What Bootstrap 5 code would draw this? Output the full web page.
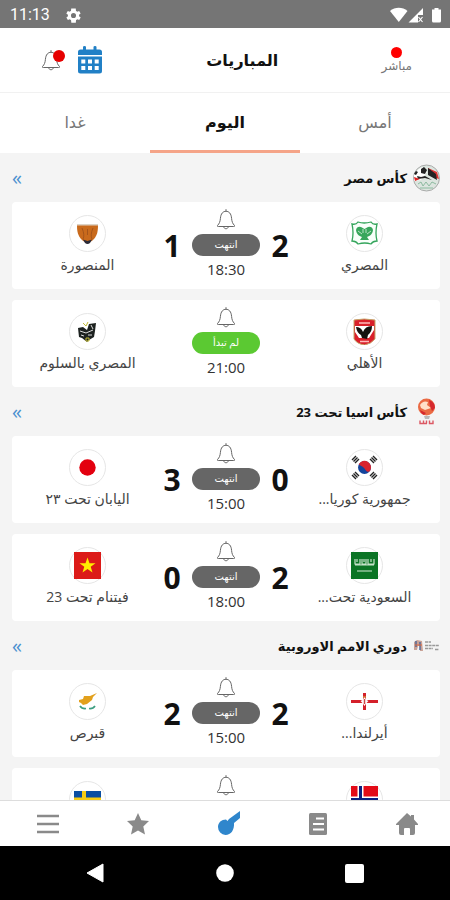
<!DOCTYPE html>
<html lang="ar" dir="rtl">
<head>
<meta charset="utf-8">
<meta name="viewport" content="width=device-width, initial-scale=1">
<title>المباريات</title>
<link rel="stylesheet" href="https://cdn.jsdelivr.net/npm/bootstrap@5.3.0/dist/css/bootstrap.min.css">
<style>
body{font-family:"Open Sans","DejaVu Sans",sans-serif;background:#f4f4f4;color:#111}
svg{display:block;flex:none}
button{color:inherit}
.sysbar{height:28px;background:#757575;color:#fff;font:16px/28px Roboto,sans-serif;padding:2px 8px 0 10px}
.topbar{height:65px;padding:0 38px 0 41px;border-bottom:1px solid #f1f1f1}
.screen-title{font-size:16px;line-height:24px;font-weight:700}
.live-btn{font-size:12px;line-height:16px;color:#777}
.live-dot{width:11px;height:11px;background:#f00}
.bell-dot{position:absolute;top:1px;right:-4px;width:12px;height:12px;background:#e60000}
.day-tab{height:60px;font-size:16px;line-height:24px;color:#777;border-bottom:3px solid transparent!important}
.day-tab.active{color:#111;font-weight:700;border-color:#f5a488!important}
.feed{min-height:0;overflow-y:auto;scrollbar-width:none;padding:0 10px 0 12px}
.feed::-webkit-scrollbar{display:none}
.league-head{height:49px;gap:6px}
.league-name{font-size:13px;line-height:20px;font-weight:700}
.more{font-size:20px;line-height:24px;color:#4a90cf}
.matches{gap:11px}
.match{height:87px;border-radius:4px}
.crest{width:37px;height:37px;border:1px solid #e6e6e6;background:#fff}
.team{padding-top:13px;min-width:0}
.team-name{font-size:14px;line-height:20px;color:#444;margin-top:3px}
.middle{gap:11px}
.score{width:18px;font-size:30px;line-height:36px;font-weight:700;padding-top:26px}
.status{width:68px;height:22px;border-radius:11px;background:#666;color:#fff;font-size:10px;line-height:20px;margin-top:4px}
.status.soon{background:#5bc932}
.kick{font-size:15px;line-height:20px;color:#333;margin-top:3px}
.bell-btn{margin-top:6px}
.tabbar{height:46px;padding:0 32px 0 37px;border-top:1px solid #ddd;color:#8a8a8a}
.tabbar .on{color:#2f86cc}
.sysnav{height:54px;padding:0 86px}
</style>
<script src="https://cdn.jsdelivr.net/npm/bootstrap@5.3.0/dist/js/bootstrap.bundle.min.js"></script>
</head>
<body class="vh-100 d-flex flex-column overflow-hidden">
<svg width="0" height="0" class="position-absolute" aria-hidden="true">
<symbol id="bell" viewBox="0 0 20 22"><path d="M10 1.200v2M1.500 17.500c2-2 2.600-4 2.900-7C4.800 5.500 7 3.300 10 3.300s5.200 2.200 5.600 7.200c.3 3 .9 5 2.900 7 .5.8 0 1-.8 1H2.300c-.8 0-1.300-.2-.8-1zM7.800 19c.3 2.300 4.100 2.300 4.400 0" fill="none" stroke="#666" stroke-width="1"/></symbol>
</svg>

<div class="sysbar d-flex align-items-center flex-shrink-0" dir="ltr">
<span>11:13</span>
<svg class="ms-3" width="15" height="15" viewBox="2 2 20 20" fill="#fff"><path d="M19.400 13c.1-.7.1-1.300 0-2l2.100-1.600-2-3.500-2.500 1a7 7 0 0 0-1.700-1L15 2.500H9l-.4 3.400a7 7 0 0 0-1.700 1l-2.500-1-2 3.500L4.600 11a8 8 0 0 0 0 2l-2.100 1.600 2 3.500 2.500-1a7 7 0 0 0 1.700 1l.4 3.400h6l.3-3.400a7 7 0 0 0 1.700-1l2.500 1 2-3.500zM12 15.400a3.400 3.400 0 1 1 0-6.800 3.400 3.400 0 0 1 0 6.800z"/></svg>
<svg class="ms-auto" width="52" height="16" viewBox="0 0 52 16"><path d="M0 4C5-.4 12.500-.4 17.500 4L8.800 15z" fill="#fff"/><path d="M18.500 15.500L33 1v7h-5v7.500z" fill="#fff"/><path d="M28.500 10l4 5m0-5l-4 5" stroke="#fff" stroke-width="1.200"/><path d="M42 2.500h2.500V1h4v1.500H51V14q0 1.500-1.500 1.500h-6Q42 15.500 42 14z" fill="#fff"/></svg>
</div>

<header class="topbar bg-white d-flex align-items-center justify-content-between flex-shrink-0">
<button class="live-btn btn p-0 border-0 d-flex flex-column align-items-center"><span class="live-dot rounded-circle"></span>مباشر</button>
<h1 class="screen-title m-0">المباريات</h1>
<div class="d-flex align-items-center gap-3">
<button class="btn p-0 border-0" aria-label="التقويم"><svg width="26" height="28" viewBox="0 0 26 28"><path d="M1 9V6q0-2.500 2.500-2.500H6V1q0-1 1.500-1T9 1v2.500h7.500V1q0-1 1.500-1t1.500 1v2.500h3Q25 3.500 25 6v3zM1 10.500h24V25q0 2.500-2.500 2.500h-19Q1 27.500 1 25z" fill="#2180c6"/><path d="M4.300 13.500h4v4h-4zm6.700 0h4v4h-4zm6.700 0h4v4h-4zM4.300 20h4v4h-4zm6.700 0h4v4h-4zm6.700 0h4v4h-4z" fill="#fff"/></svg></button>
<button class="btn p-0 border-0 position-relative" aria-label="التنبيهات"><svg width="20" height="22"><use href="#bell"/></svg><span class="bell-dot rounded-circle"></span></button>
</div>
</header>

<nav class="d-flex bg-white flex-shrink-0">
<button class="day-tab btn rounded-0 border-0 p-0 flex-fill w-100">أمس</button>
<button class="day-tab btn rounded-0 border-0 p-0 flex-fill w-100 active">اليوم</button>
<button class="day-tab btn rounded-0 border-0 p-0 flex-fill w-100">غدا</button>
</nav>

<main class="feed flex-grow-1">
<section>
<div class="league-head d-flex align-items-center">
<svg width="27" height="28" viewBox="0 0 27 28"><circle cx="13.500" cy="14" r="13" fill="#dce5df" stroke="#999" stroke-width=".8"/><path d="M1 11q4-7 9-8l4 5-6 8-7 1z" fill="#fff"/><path d="M15 4l9 4 2 7-6-2-5-4z" fill="#d33"/><path d="M15 4l8 6 1 6-9-5zM4 12l4 1 4-1 7 4-7-2-7 1zM8 5l3-2 3 3-2 4-4-1zM3 7l2 1-2 3-2-1z" fill="#222"/><path d="M1 13l6 2-5 2z" fill="#d22"/><path d="M5 20l3-2 2 4 3-4 3 4 3-4 4 2M7 24h13" stroke="#8dbba0" fill="none"/></svg>
<h2 class="league-name m-0">كأس مصر</h2><a class="more text-decoration-none me-auto" href="#" dir="ltr" aria-label="المزيد">«</a>
</div>
<div class="matches d-flex flex-column">
<article class="match bg-white d-flex">
<div class="team flex-fill w-100 d-flex flex-column align-items-center"><span class="crest rounded-circle d-flex align-items-center justify-content-center"><svg width="27" height="27" viewBox="0 0 27 27"><path d="M1 4q4 1 6-2 6 2 13 0 2 3 6 2-2 9 0 17-4 0-6 3-6-2-13 0-2-3-6-3 2-8 0-17z" fill="#f8fffa" stroke="#35a55c" stroke-width="1.300"/><path d="M5 10q1-4 5-3l3.500 2L17 7q4-1 5 3c-.5 4-3 6-6 7l2 3H9l2-3c-3-1-5.500-3-6-7z" fill="#38a65c"/><path d="M12 9v4m3-4v4M7 11l4 3m9-3l-4 3" stroke="#d9f2df" stroke-width=".8"/></svg></span><span class="team-name text-nowrap">المصري</span></div>
<div class="middle d-flex"><span class="score text-center">2</span><div class="d-flex flex-column align-items-center"><button class="bell-btn btn p-0 border-0" aria-label="تنبيه"><svg width="20" height="22"><use href="#bell"/></svg></button><span class="status text-center">انتهت</span><time class="kick">18:30</time></div><span class="score text-center">1</span></div>
<div class="team flex-fill w-100 d-flex flex-column align-items-center"><span class="crest rounded-circle d-flex align-items-center justify-content-center"><svg width="27" height="27" viewBox="0 0 27 27"><path d="M3 5h21c0 7-1 11-5 15-3 3-8 3-11 0-4-4-5-8-5-15z" fill="#c96a1c"/><path d="M3 4h21v1.500H3z" fill="#dcd3c6"/><path d="M8 8q3 7 1 11M19 8q-3 7-1 11M13.500 9v6" stroke="#a5541a" fill="none"/><path d="M9 19.500l4.500 1.500 4.500-1.500-2 3.500q-2.500 2-5 0z" fill="#2a2a38"/></svg></span><span class="team-name text-nowrap">المنصورة</span></div>
</article>
<article class="match bg-white d-flex">
<div class="team flex-fill w-100 d-flex flex-column align-items-center"><span class="crest rounded-circle d-flex align-items-center justify-content-center"><svg width="27" height="27" viewBox="0 0 27 27"><path d="M3 2q10-2 21 0v19q-4 5-10.500 6Q6 26 3 21z" fill="#d9202a" stroke="#c5a66b"/><path d="M4 8h19v12H4z" fill="#fff"/><path d="M4 14l4 6H4zM23 12v8h-5z" fill="#d9202a"/><path d="M8 5h11M9 23.500h9" stroke="#fbb" stroke-width="1.500"/><path d="M5 9q5 0 7 5 2-6 9-6 0 6-4 9l-1 4-5-1-1-3q-4-2-5-8z" fill="#15120f"/></svg></span><span class="team-name text-nowrap">الأهلي</span></div>
<div class="middle d-flex"><span class="score text-center"></span><div class="d-flex flex-column align-items-center"><button class="bell-btn btn p-0 border-0" aria-label="تنبيه"><svg width="20" height="22"><use href="#bell"/></svg></button><span class="status soon text-center">لم تبدأ</span><time class="kick">21:00</time></div><span class="score text-center"></span></div>
<div class="team flex-fill w-100 d-flex flex-column align-items-center"><span class="crest rounded-circle d-flex align-items-center justify-content-center"><svg width="27" height="27" viewBox="0 0 27 27"><path d="M4 10l5-1 4 3 2-6 7-1-1 8-1 6-5 3-2 2-5-4-3-1z" fill="#1d2220"/><path d="M17 7l2 4M6 13l6 2 7-3M7 17l3 1m4-1h4" stroke="#ddd" fill="none"/><path d="M9 5l3 3m2-4l-2 4M12 20h3v3h-3z" stroke="#c4bc35" fill="none"/></svg></span><span class="team-name text-nowrap">المصري بالسلوم</span></div>
</article>
</div>
</section>

<section>
<div class="league-head d-flex align-items-center">
<svg width="27" height="28" viewBox="0 0 27 28"><circle cx="13.500" cy="9" r="8.500" fill="#ea6a43"/><path d="M7 7q3-5 8-3l-1 3 4 3-6 2-4-2z" fill="#ffe1c9"/><path d="M16 2q6 2 6 8l-3 3-2-5zM7 12l6 3-2 2q-3-1-4-5z" fill="#d5282d"/><path d="M11 18h6l-1 3h-4z" fill="#b9b9b9"/><path d="M7 22.500v3h3.500v-3m3 3v-3m3 0v3H20v-3m-9 3h3" fill="none" stroke="#dc5964" stroke-width="1.400"/></svg>
<h2 class="league-name m-0">كأس اسيا تحت 23</h2><a class="more text-decoration-none me-auto" href="#" dir="ltr" aria-label="المزيد">«</a>
</div>
<div class="matches d-flex flex-column">
<article class="match bg-white d-flex">
<div class="team flex-fill w-100 d-flex flex-column align-items-center"><span class="crest rounded-circle d-flex align-items-center justify-content-center"><svg width="27" height="27" viewBox="0 0 27 27"><circle cx="13.500" cy="13.500" r="6.500" fill="#13449c"/><path d="M7.800 10.200a6.500 6.500 0 0 1 11.400 6.500c-1.500 2-4 1-5.200-1.500-1.500-3-5-3.500-6.200-5z" fill="#d8232f"/><g stroke="#222" stroke-width="1.400"><path d="M1 6l4-4M2.500 7.500l4-4M4 9l4-4M19 5l4 4M20.500 3.500l4 4M22 2l4 4M1 21l4 4M2.500 19.500l4 4M4 18l4 4M19 22l4-4M20.500 23.500l4-4M22 25l4-4"/></g></svg></span><span class="team-name text-nowrap">جمهورية كوريا...</span></div>
<div class="middle d-flex"><span class="score text-center">0</span><div class="d-flex flex-column align-items-center"><button class="bell-btn btn p-0 border-0" aria-label="تنبيه"><svg width="20" height="22"><use href="#bell"/></svg></button><span class="status text-center">انتهت</span><time class="kick">15:00</time></div><span class="score text-center">3</span></div>
<div class="team flex-fill w-100 d-flex flex-column align-items-center"><span class="crest rounded-circle d-flex align-items-center justify-content-center"><svg width="27" height="27" viewBox="0 0 27 27"><circle cx="13.500" cy="13.500" r="8.200" fill="#e3000f"/></svg></span><span class="team-name text-nowrap">اليابان تحت ٢٣</span></div>
</article>
<article class="match bg-white d-flex">
<div class="team flex-fill w-100 d-flex flex-column align-items-center"><span class="crest rounded-circle d-flex align-items-center justify-content-center"><svg width="27" height="27" viewBox="0 0 27 27"><path d="M0 0h27v27H0z" fill="#0b7425"/><path d="M4 7v5h5V7m2 0v5h4V7m2 0v5h6V7M6 7v3m7-3v3m7-3v3M4 13h19" fill="none" stroke="#c5e2c9" stroke-width="1.200"/><path d="M6 19h15" stroke="#d5ead8"/></svg></span><span class="team-name text-nowrap">السعودية تحت...</span></div>
<div class="middle d-flex"><span class="score text-center">2</span><div class="d-flex flex-column align-items-center"><button class="bell-btn btn p-0 border-0" aria-label="تنبيه"><svg width="20" height="22"><use href="#bell"/></svg></button><span class="status text-center">انتهت</span><time class="kick">18:00</time></div><span class="score text-center">0</span></div>
<div class="team flex-fill w-100 d-flex flex-column align-items-center"><span class="crest rounded-circle d-flex align-items-center justify-content-center"><svg width="27" height="27" viewBox="0 0 27 27"><path d="M0 0h27v27H0z" fill="#dc1a18"/><path d="M13.500 5.500l2 5.700h6l-4.800 3.600 1.800 5.800-5-3.500-5 3.500 1.800-5.800-4.800-3.600h6z" fill="#ffee00"/></svg></span><span class="team-name text-nowrap">فيتنام تحت 23</span></div>
</article>
</div>
</section>

<section>
<div class="league-head d-flex align-items-center">
<svg width="27" height="28" viewBox="0 0 27 28"><path d="M12 10h6m-6 3.500h14m-14 3h8m2 1h4" stroke="#999" stroke-width="1.500" stroke-dasharray="3 .6"/><path d="M1 10l3-2 5 1 1 10H7v-5H5l-1 4H1z" fill="#c9a297"/><path d="M3 9v6m4-5v8" stroke="#546a98" stroke-width="1.500"/><path d="M2 13h7" stroke="#e2683c"/></svg>
<h2 class="league-name m-0">دوري الامم الاوروبية</h2><a class="more text-decoration-none me-auto" href="#" dir="ltr" aria-label="المزيد">«</a>
</div>
<div class="matches d-flex flex-column">
<article class="match bg-white d-flex">
<div class="team flex-fill w-100 d-flex flex-column align-items-center"><span class="crest rounded-circle d-flex align-items-center justify-content-center"><svg width="27" height="27" viewBox="0 0 27 27"><path d="M0 13.500h27M13.500 5v17" stroke="#d4202a" stroke-width="3"/><path d="M13.500 9l2 3 2 1-2 2-2 3-2-3-2-2 2-1z" fill="#fff"/><path d="M13.500 11v5" stroke="#c44" stroke-width="1.500"/><path d="M12 9h3" stroke="#d8ad45"/></svg></span><span class="team-name text-nowrap">أيرلندا...</span></div>
<div class="middle d-flex"><span class="score text-center">2</span><div class="d-flex flex-column align-items-center"><button class="bell-btn btn p-0 border-0" aria-label="تنبيه"><svg width="20" height="22"><use href="#bell"/></svg></button><span class="status text-center">انتهت</span><time class="kick">15:00</time></div><span class="score text-center">2</span></div>
<div class="team flex-fill w-100 d-flex flex-column align-items-center"><span class="crest rounded-circle d-flex align-items-center justify-content-center"><svg width="27" height="27" viewBox="0 0 27 27"><path d="M5 12l4-1 1-3 6 0 7-3-4 4-1 3-5 4-4 1-2-2-2-1z" fill="#e2a01c"/><path d="M6 18q2 3 6 2.500m9-2.500q-2 3-6 2.500" stroke="#3c9e80" stroke-width="1.700" fill="none"/></svg></span><span class="team-name text-nowrap">قبرص</span></div>
</article>
<article class="match bg-white d-flex">
<div class="team flex-fill w-100 d-flex flex-column align-items-center"><span class="crest rounded-circle d-flex align-items-center justify-content-center"><svg width="27" height="27" viewBox="0 0 27 27"><path d="M0 0h27v27H0z" fill="#e30a17"/><path d="M9.500 0v27M0 13.500h27" stroke="#fff" stroke-width="6"/><path d="M9.500 0v27M0 13.500h27" stroke="#0a1f80" stroke-width="3"/></svg></span></div>
<div class="middle d-flex"><span class="score"></span><div class="d-flex flex-column align-items-center"><button class="bell-btn btn p-0 border-0" aria-label="تنبيه"><svg width="20" height="22"><use href="#bell"/></svg></button><span class="status"></span></div><span class="score"></span></div>
<div class="team flex-fill w-100 d-flex flex-column align-items-center"><span class="crest rounded-circle d-flex align-items-center justify-content-center"><svg width="27" height="27" viewBox="0 0 27 27"><path d="M0 5h27v17H0z" fill="#0b4ea2"/><path d="M10 5v17M0 13.500h27" stroke="#f8cc13" stroke-width="4"/></svg></span></div>
</article>
</div>
</section>
</main>

<nav class="tabbar bg-white d-flex align-items-center justify-content-between flex-shrink-0">
<a class="text-reset" href="#" aria-label="الرئيسية"><svg width="22" height="24" viewBox="0 0 22 24" fill="currentColor"><path d="M11 1l4 3.500V3h3v4.500l4 4.500v1h-3v8q0 2-2 2h-3v-6q0-1-1-1H9q-1 0-1 1v6H5q-2 0-2-2v-8H0v-1z"/></svg></a>
<a class="text-reset" href="#" aria-label="الأخبار"><svg width="20" height="24" viewBox="0 0 20 24"><rect x="1" y="1" width="18" height="22" rx="1.500" fill="currentColor"/><path d="M8 6.500h8M5 12h11M5 17.500h11" stroke="#fff" stroke-width="2"/></svg></a>
<a class="on" href="#" aria-label="المباريات"><svg width="24" height="26" viewBox="0 0 24 26" fill="currentColor"><path d="M23 0v7l-6 5c.5 7-3 12-8.500 12A8 8 0 0 1 1 16c0-4.500 3.500-7.500 8-7.500l1.500 1.500 1.500-2z"/></svg></a>
<a class="text-reset" href="#" aria-label="المفضلة"><svg width="22" height="22" viewBox="0 0 22 22" fill="currentColor"><path d="M11 0l3.300 7.200 7.700.9-5.700 5.300L18 21.500l-7-4-7 4 1.700-8.100L0 8.100l7.700-.9z"/></svg></a>
<a class="text-reset" href="#" aria-label="القائمة"><svg width="22" height="20" viewBox="0 0 22 20"><path d="M0 2h22M0 10h22M0 18h22" stroke="currentColor" stroke-width="2.600"/></svg></a>
</nav>
<div class="sysnav bg-black d-flex align-items-center justify-content-between flex-shrink-0" dir="ltr">
<svg width="18" height="20" viewBox="0 0 18 20"><path d="M1 10L17 1v18z" fill="#fff" stroke="#fff" stroke-linejoin="round"/></svg>
<svg width="18" height="18" viewBox="0 0 18 18"><circle cx="9" cy="9" r="8.800" fill="#fff"/></svg>
<svg width="19" height="19" viewBox="0 0 19 19"><rect width="19" height="19" rx="2" fill="#fff"/></svg>
</div>
</body>
</html>
